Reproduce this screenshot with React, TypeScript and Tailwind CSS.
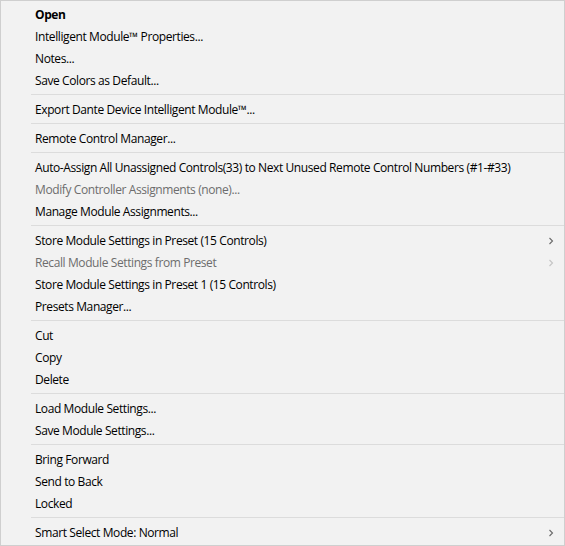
import React from "react";

type Entry =
  | { kind: "item"; label: string; bold?: boolean; disabled?: boolean; submenu?: boolean }
  | { kind: "sep" };

const entries: Entry[] = [
  { kind: "item", label: "Open", bold: true },
  { kind: "item", label: "Intelligent Module™ Properties..." },
  { kind: "item", label: "Notes..." },
  { kind: "item", label: "Save Colors as Default..." },
  { kind: "sep" },
  { kind: "item", label: "Export Dante Device Intelligent Module™..." },
  { kind: "sep" },
  { kind: "item", label: "Remote Control Manager..." },
  { kind: "sep" },
  { kind: "item", label: "Auto-Assign All Unassigned Controls(33) to Next Unused Remote Control Numbers (#1-#33)" },
  { kind: "item", label: "Modify Controller Assignments (none)...", disabled: true },
  { kind: "item", label: "Manage Module Assignments..." },
  { kind: "sep" },
  { kind: "item", label: "Store Module Settings in Preset (15 Controls)", submenu: true },
  { kind: "item", label: "Recall Module Settings from Preset", disabled: true, submenu: true },
  { kind: "item", label: "Store Module Settings in Preset 1 (15 Controls)" },
  { kind: "item", label: "Presets Manager..." },
  { kind: "sep" },
  { kind: "item", label: "Cut" },
  { kind: "item", label: "Copy" },
  { kind: "item", label: "Delete" },
  { kind: "sep" },
  { kind: "item", label: "Load Module Settings..." },
  { kind: "item", label: "Save Module Settings..." },
  { kind: "sep" },
  { kind: "item", label: "Bring Forward" },
  { kind: "item", label: "Send to Back" },
  { kind: "item", label: "Locked" },
  { kind: "sep" },
  { kind: "item", label: "Smart Select Mode: Normal", submenu: true },
];

function Chevron({ disabled }: { disabled?: boolean }) {
  return (
    <svg width="6" height="8" viewBox="0 0 6 8" className="shrink-0">
      <path
        d="M1.5 1 L4.5 4 L1.5 7"
        fill="none"
        stroke={disabled ? "#c4c4c4" : "#6a6a6a"}
        strokeWidth="1.1"
      />
    </svg>
  );
}

export default function App() {
  return (
    <div
      className="w-[565px] h-[546px] bg-[#f2f2f2] border border-[#cfcfcf] flex flex-col pt-[3px] text-[12px] leading-none tracking-[-0.4px] text-black"
      style={{ fontFamily: '"Open Sans", "Noto Sans", sans-serif' }}
    >
      {entries.map((e, i) =>
        e.kind === "sep" ? (
          <div key={i} className="h-[7px] pt-[2px] pl-[30px]">
            <div className="h-px w-full bg-[#dcdcdc]" />
          </div>
        ) : (
          <div key={i} className="h-[22px] flex items-center pl-[34px] pr-[10px]">
            <span
              className={
                "flex-1 whitespace-nowrap " +
                (e.bold ? "font-bold " : "font-[450] ") +
                (e.disabled ? "text-[#6d6d6d]" : "text-black")
              }
            >
              {e.label}
            </span>
            {e.submenu && <Chevron disabled={e.disabled} />}
          </div>
        )
      )}
    </div>
  );
}
